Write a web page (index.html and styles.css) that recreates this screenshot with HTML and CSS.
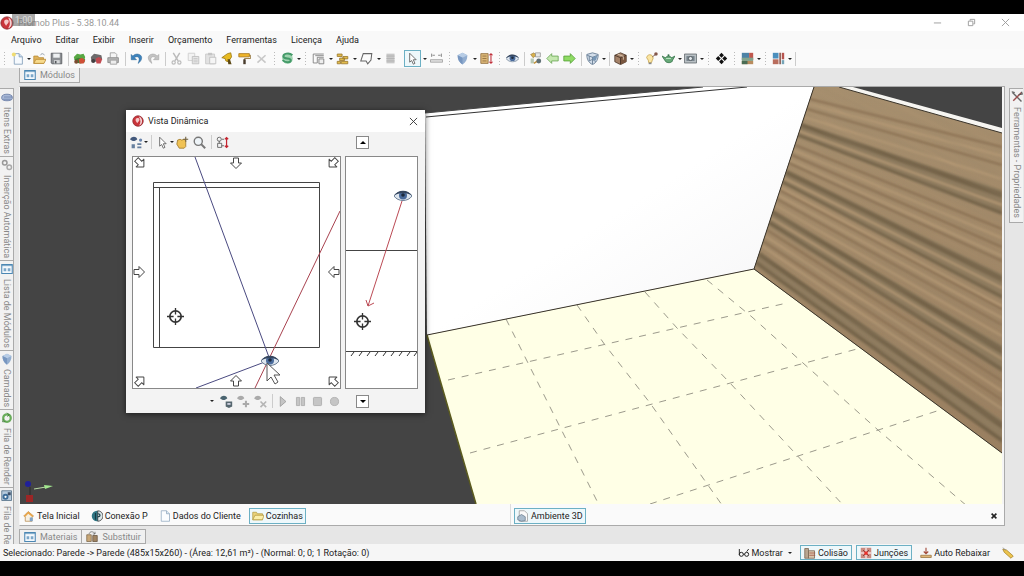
FILE: index.html
```html
<!DOCTYPE html>
<html lang="pt-BR">
<head>
  <meta charset="UTF-8" />
  <title>Promob Plus - 5.38.10.44</title>
  <link rel="stylesheet" href="styles.css">
</head>
<body>

  <!-- shared icons -->
  <svg class="sprite" aria-hidden="true">
    <symbol id="logo" viewBox="0 0 16 16"><circle cx="8" cy="8" r="7" fill="#c9343a"/><path d="M9 1.5a7 7 0 0 1 0 13c3-4 3-8 0-13z" fill="#f3d5d5"/><path d="M5 5c2-2 5-1 5 1s-2 3-3 5c-1-2-3-3-2-6z" fill="#f6c9c9"/><circle cx="8" cy="8" r="7" fill="none" stroke="#8e2a30"/></symbol>
    <symbol id="page" viewBox="0 0 16 16"><path d="M3 1h7l4 4v10H3z" fill="#fbfdff" stroke="#8fa7bd"/><path d="M10 1v4h4" fill="#dbe8f3" stroke="#8fa7bd"/></symbol>
    <symbol id="new" viewBox="0 0 16 16"><path d="M4 2h6l4 4v9H4z" fill="#f6fafe" stroke="#7f9bb8"/><path d="M10 2v4h4" fill="#c8dcee" stroke="#7f9bb8"/><circle cx="3.5" cy="3" r="2.5" fill="#f0dc72"/></symbol>
    <symbol id="open" viewBox="0 0 16 16"><path d="M1 5h5l1 2h6v7H1z" fill="#e0b35a" stroke="#b98a35"/><path d="M3.500 9H16l-2.500 5H1z" fill="#f7da8c" stroke="#b98a35"/><path d="M9 4c2-3 4-2 5 0" fill="none" stroke="#7d8b99"/></symbol>
    <symbol id="save" viewBox="0 0 16 16"><path d="M1.500 1.500h13v13h-12l-1-1z" fill="#8d9094" stroke="#55585c"/><path d="M4 2h8v5H4z" fill="#eef0f2"/><path d="M5 10h7v4H5z" fill="#d5d7d9"/><path d="M6 11h2v3H6z" fill="#55585c"/></symbol>
    <symbol id="blocks-green" viewBox="0 0 16 16"><path d="M1 6l4-4 4 1 4-1 2 4-1 4H2z" fill="#58a844"/><path d="M2 9l5-2 4 2 4 0-1 4-5 1-6-1z" fill="#3d7d33"/><path d="M7 9l4-2 4 3-2 4-5 0z" fill="#d05038"/><circle cx="4" cy="12" r="2.500" fill="#7c4c31"/></symbol>
    <symbol id="blocks-red" viewBox="0 0 16 16"><path d="M1 6l4-4 5 1 4 1 1 5-4 3H2z" fill="#6d6a6b"/><path d="M7 8l4-2 4 3-2 5-5 0z" fill="#c24a50"/><circle cx="4" cy="11" r="2.500" fill="#433e40"/></symbol>
    <symbol id="printer" viewBox="0 0 16 16"><path d="M4 7V1h6l2 2v4" fill="#f5f5f5" stroke="#999"/><path d="M1 7h13v6H1z" fill="#b5b5b5" stroke="#888"/><path d="M4 10h8v5H4z" fill="#ededed" stroke="#999"/></symbol>
    <symbol id="undo" viewBox="0 0 16 16"><path d="M1.500 3v6.500H8L5.500 7c3-2.500 7-1 5.500 4l-1 3c6-4 6-11-1-11.500C6.500 2.500 5 3.500 3.500 5z" fill="#3d83bd" stroke="#235e90" stroke-width=".6"/></symbol>
    <symbol id="redo" viewBox="0 0 16 16"><path d="M14.500 3v6.500H8L10.500 7c-3-2.500-7-1-5.500 4l1 3C0 10 0 3 7 2.500c2.500 0 4 1 5.500 2.500z" fill="#c3c3c3" stroke="#999" stroke-width=".6"/></symbol>
    <symbol id="cut" viewBox="0 0 16 16"><path d="M4 1l6 10M12 1L6 11" stroke="#bbb" stroke-width="1.800"/><circle cx="4.500" cy="13" r="2" fill="none" stroke="#bbb" stroke-width="1.500"/><circle cx="11.500" cy="13" r="2" fill="none" stroke="#bbb" stroke-width="1.500"/></symbol>
    <symbol id="copy" viewBox="0 0 16 16"><path d="M1.500 1.500h8v9h-8z" fill="#f3f3f3" stroke="#ccc"/><path d="M6.500 5.500h8v9h-8z" fill="#e5e5e5" stroke="#bbb"/><path d="M8 8h5M8 10h5M8 12h5" stroke="#c5c5c5"/></symbol>
    <symbol id="paste" viewBox="0 0 16 16"><path d="M2 2.500h11v12H2z" fill="#e2e2e2" stroke="#c5c5c5"/><path d="M5 1h5v3H5z" fill="#c5c5c5"/><path d="M7 6.500h7.500v8H7z" fill="#f5f5f5" stroke="#bbb"/></symbol>
    <symbol id="brush" viewBox="0 0 16 16"><path d="M1 7l7-5 4-1 1 5-4 6-3-1-1-3z" fill="#e8bb21" stroke="#9a7811"/><path d="M8 9l3 0 2 6-4 0z" fill="#5d4915"/></symbol>
    <symbol id="roller" viewBox="0 0 16 16"><path d="M1 2h13v4H1z" fill="#f0b62b" stroke="#a9781b"/><path d="M14 4h1.500v4H8v2" fill="none" stroke="#8b6a2b"/><path d="M6.500 9h3v6h-3z" fill="#493c2d"/></symbol>
    <symbol id="delete" viewBox="0 0 16 16"><path d="M3 4l10 9M13 4L3 13" stroke="#c8c8c8" stroke-width="2"/></symbol>
    <symbol id="money" viewBox="0 0 16 16"><circle cx="8" cy="8" r="6.500" fill="#9fd3af"/><path d="M14 4C10 0 2 2 3 6c1 3 9 1 9 4s-6 4-10 0" fill="none" stroke="#449a69" stroke-width="2.500"/></symbol>
    <symbol id="frames" viewBox="0 0 16 16"><path d="M1.500 2.500h13M1.500 2.500v11h5v-7h8M4 4.500h10.500" fill="none" stroke="#777"/><path d="M8.500 8.500h6v6h-6z" fill="#eee" stroke="#777"/></symbol>
    <symbol id="bricks" viewBox="0 0 16 16"><path d="M1.500 2.500h6v3h-6zM4.500 7.500h6v3h-6zM8.500 5.500h6v3h-6zM6.500 11.500h8v3h-8zM1.500 11.500h4v3h-4z" fill="#e3bd4c" stroke="#99762e"/></symbol>
    <symbol id="shape" viewBox="0 0 16 16"><path d="M4 2h10.500l-1 8-4 4.500-2-3.500H1z" fill="#fbfbfb" stroke="#666" stroke-width="1.300"/></symbol>
    <symbol id="sheet" viewBox="0 0 16 16"><path d="M3 2h10v12H3z" fill="#c8c8c8"/><path d="M3 5h10M3 8h10M3 11h10" stroke="#b0b0b0"/></symbol>
    <symbol id="pointer" viewBox="0 0 16 16"><path d="M4.500 1.500v11l2.500-2 2 4.500 2-1-2-4.500h3.500z" fill="#fff" stroke="#555"/></symbol>
    <symbol id="measure" viewBox="0 0 16 16"><path d="M2 2v4M14 2v4M3 4h3M10 4h3" stroke="#888" stroke-width="1.200"/><path d="M.5 9.500h15v3H.5z" fill="#e6e6e6" stroke="#999"/></symbol>
    <symbol id="shield" viewBox="0 0 16 16"><path d="M8 1l6 3c0 5-2 9-6 11.500C4 13 2 9 2 4z" fill="#93aed0"/><path d="M8 1l6 3-6 3-6-3z" fill="#b8cde6"/><path d="M8 7v8.500C4 13 2 9 2 4z" fill="#7796c0"/></symbol>
    <symbol id="box-height" viewBox="0 0 16 16"><path d="M1 2h9v12H1z" fill="#dcb878" stroke="#8e6b3b"/><path d="M3 5h5M3 8h5M3 11h5" stroke="#8e6b3b"/><path d="M13.500 2v12M11.500 4l2-2 2 2M11.500 12l2 2 2-2" fill="none" stroke="#c02f3a" stroke-width="1.300"/></symbol>
    <symbol id="eye" viewBox="0 0 18 14"><path d="M0 7C4 1 14 1 18 7c-4 6-14 6-18 0z" fill="#dde5ee" stroke="#6d8097"/><circle cx="9" cy="6.500" r="4" fill="#4a6b9c"/><circle cx="9" cy="6" r="1.800" fill="#1d2a3d"/><path d="M0 6.500C4 0 14 0 18 6.500 13 3 5 3 0 6.500z" fill="#364760"/></symbol>
    <symbol id="config" viewBox="0 0 16 16"><path d="M2 3l4-2 3 3-4 3z" fill="#d8b04c" stroke="#8e7540" stroke-width=".7"/><path d="M8 1h6v5H8z" fill="#e6e8e8" stroke="#777" stroke-width=".7"/><path d="M2 8h4v6H2z" fill="#b8c8b4"/><path d="M6 14l6-4" stroke="#c0913a" stroke-width="2"/><circle cx="12" cy="11" r="3" fill="#5f6f75"/></symbol>
    <symbol id="arrow-left" viewBox="0 0 16 16"><path d="M1 8l6-6v3h8v6H7v3z" fill="#c5e8b0" stroke="#67a553"/></symbol>
    <symbol id="arrow-right" viewBox="0 0 16 16"><path d="M15 8L9 2v3H1v6h8v3z" fill="#8fdb64" stroke="#55a038"/></symbol>
    <symbol id="shield-cube" viewBox="0 0 16 16"><path d="M1 3l7-2 7 2c0 6-2 10-7 12.500C3 13 1 9 1 3z" fill="#d3deea" stroke="#5d748d"/><path d="M8 6v9M1.500 4L8 6.500 14.500 4M4 5v6l4-2 4 3" fill="none" stroke="#5d748d"/><path d="M8 6.500l6-2-2 6-4-1z" fill="#7696b5"/></symbol>
    <symbol id="cube" viewBox="0 0 16 16"><path d="M8 1l7 3v8l-7 3.500L1 12V4z" fill="#a5836a" stroke="#4b3629"/><path d="M8 7l7-3v8l-7 3.500z" fill="#79563f"/><path d="M1 4l7 3 7-3M8 7v8" fill="none" stroke="#3d2b20"/><path d="M4.500 2.500l7 3v4" fill="none" stroke="#e5d2bb"/></symbol>
    <symbol id="bulb" viewBox="0 0 16 16"><path d="M2 7a4 4 0 1 1 7 3l-1 3H4.500L4 10z" fill="#fae5a3" stroke="#c6a450"/><path d="M4.500 13h3.500v2H4.500z" fill="#888"/><path d="M9 6l4-3" stroke="#6b4a3d"/><circle cx="13.500" cy="2.500" r="2.200" fill="#83574b"/></symbol>
    <symbol id="teapot" viewBox="0 0 16 16"><path d="M0 5l4 2c1-2 7-2 8 0l4-2-3 5c0 4-8 4-9 1z" fill="#67a978" stroke="#36744a"/><circle cx="8" cy="4" r="1.300" fill="#36744a"/><path d="M5 8h6" stroke="#c9edcf"/></symbol>
    <symbol id="photo" viewBox="0 0 16 16"><path d="M.5 2.500h15v11H.5z" fill="#b9c0c4" stroke="#5f666b"/><path d="M3 5h10v6H3z" fill="#76838b"/><circle cx="8" cy="8" r="2.500" fill="#dfe6ea" stroke="#4d5459"/></symbol>
    <symbol id="diamonds" viewBox="0 0 16 16"><path d="M8 1l3 3-3 3-3-3zM4 5l3 3-3 3-3-3zM12 5l3 3-3 3-3-3zM8 9l3 3-3 3-3-3z" fill="#111"/></symbol>
    <symbol id="palette" viewBox="0 0 16 16"><path d="M1 1h9v9H1z" fill="#4d83a6"/><path d="M10 1h5v9h-5z" fill="#c0584e"/><path d="M1 7h14v4H1z" fill="#83a48d"/><path d="M1 11h14v4H1z" fill="#b98c5e"/><path d="M1 11h7v4H1z" fill="#4a6d55"/></symbol>
    <symbol id="palette2" viewBox="0 0 16 16"><path d="M1 1h7v7H1z" fill="#4b8fbd"/><path d="M9 1h2v14H9z" fill="#8a5b53"/><path d="M12 1h3v8h-3z" fill="#b7544e"/><path d="M1 9h7v6H1z" fill="#b96d5d"/><path d="M12 10h3v5h-3z" fill="#76a4b7"/></symbol>
    <symbol id="panel" viewBox="0 0 16 16"><path d="M1 2h14v12H1z" fill="#f4f9fd" stroke="#4b87b3" stroke-width="1.400"/><path d="M1 3.500h14" stroke="#4b87b3"/><path d="M3.500 7H7v4H3.500zM9 7h3.500v4H9z" fill="#7ba7c9"/></symbol>
    <symbol id="swap" viewBox="0 0 16 16"><path d="M1 5h6v9H1z" fill="#c9a878" stroke="#7c6548"/><path d="M9 6h6v8H9z" fill="#a08463" stroke="#66523c"/><path d="M4 4c1-4 6-4 8 0M12 1v3H9" fill="none" stroke="#666"/></symbol>
    <symbol id="clip" viewBox="0 0 16 16"><path d="M1 8c0-5 14-5 14 0v2c0 4-14 4-14 0z" fill="#a9b9d7" stroke="#5a6f9c"/><path d="M4 8h11M3 11h10" stroke="#6a7fa9"/></symbol>
    <symbol id="gears" viewBox="0 0 16 16"><circle cx="5" cy="5" r="3" fill="none" stroke="#999" stroke-width="2"/><circle cx="11" cy="11" r="3" fill="none" stroke="#aaa" stroke-width="2"/></symbol>
    <symbol id="recycle" viewBox="0 0 16 16"><circle cx="8" cy="8" r="5" fill="none" stroke="#69ad5b" stroke-width="3"/><path d="M8 1l3 3-3 2M3 9l-1 4 4 0" fill="none" stroke="#3c7733"/></symbol>
    <symbol id="queue" viewBox="0 0 16 16"><path d="M1 1h13v13H1z" fill="#b7cbdd" stroke="#49677f"/><circle cx="6" cy="9" r="4" fill="#3d6d99"/><circle cx="6" cy="9" r="1.500" fill="#fff"/><path d="M9 3h4v4H9z" fill="#41526a"/></symbol>
    <symbol id="tools" viewBox="0 0 16 16"><path d="M2 2l12 12" stroke="#666" stroke-width="2"/><path d="M14 2L3 13" stroke="#9d4c4c" stroke-width="2"/><path d="M10 5l5-1-1-3M1 1l4 1" fill="none" stroke="#555" stroke-width="1.500"/></symbol>
    <symbol id="home" viewBox="0 0 16 16"><path d="M1 8l6-6 7 6-2 1v6H3V9z" fill="#f7f0e2" stroke="#b58a4e"/><path d="M1 8l6-6 7 6-2 1-5-4-4 4z" fill="#e9a548"/><path d="M9 10h4v5H9z" fill="#7fa3c7"/></symbol>
    <symbol id="connect" viewBox="0 0 16 16"><circle cx="8" cy="8" r="7" fill="#2f7583"/><path d="M9 1a7 7 0 0 1 0 14z" fill="#dbe6e9" stroke="#333"/><path d="M6 4v9M9 5c4 0 4 4 0 4" fill="none" stroke="#163a44" stroke-width="1.500"/></symbol>
    <symbol id="folder" viewBox="0 0 16 16"><path d="M1 3h5l1 2h7v8H1z" fill="#ead27a" stroke="#b39a42"/><path d="M4 7h12l-2 6H1z" fill="#fbeea9" stroke="#b39a42"/></symbol>
    <symbol id="env" viewBox="0 0 16 16"><path d="M3 1h7l4 4v10H3z" fill="#fafafa" stroke="#999"/><path d="M1 9l5-3 5 3v5l-5 1-5-2z" fill="#a9bccd" stroke="#677b8d"/></symbol>
    <symbol id="glasses" viewBox="0 0 18 16"><path d="M2 2v9M16 2l-3 4" stroke="#222" stroke-width="1.400"/><circle cx="5" cy="10" r="3" fill="none" stroke="#222" stroke-width="1.500"/><circle cx="13" cy="10" r="3" fill="none" stroke="#222" stroke-width="1.500"/><path d="M8 10h2" stroke="#222" stroke-width="1.500"/></symbol>
    <symbol id="collide" viewBox="0 0 16 16"><path d="M1 2h5v13H1z" fill="#b9a590" stroke="#75614d"/><path d="M6 5h8v10H6z" fill="#d9c7ae" stroke="#75614d"/><path d="M7 8h8M7 11h8" stroke="#a14b3c"/></symbol>
    <symbol id="joints" viewBox="0 0 16 16"><path d="M1 1h14v14H1z" fill="#c98a80"/><path d="M1 8h14M8 1v14" stroke="#f3dada" stroke-width="2"/><path d="M4 4l8 8M12 4l-8 8" stroke="#7c2826"/><circle cx="8" cy="8" r="2.500" fill="#e9312b"/></symbol>
    <symbol id="lower" viewBox="0 0 16 16"><path d="M8 1v8M5 6l3 3 3-3" fill="none" stroke="#a24b3b" stroke-width="1.500"/><path d="M1 11h14v3H1z" fill="#e0b576" stroke="#96703b"/></symbol>
    <symbol id="tag" viewBox="0 0 16 16"><path d="M1 3l5 1 9 8-3 3-9-8z" fill="#ecc44e" stroke="#a68227"/><path d="M1 1l4 3" stroke="#888"/></symbol>
    <symbol id="viewpoints" viewBox="0 0 16 16"><path d="M0 4c3-4 7-4 9 0-3 3-6 3-9 0z" fill="#43597c"/><circle cx="13" cy="5" r="2" fill="#6a85ad"/><path d="M2 10h4v5H2zM9 9h5v2H9zM9 13h5v2H9z" fill="#67809f"/></symbol>
    <symbol id="hand" viewBox="0 0 16 16"><path d="M2 5l3-1 2 1 3-1 2 2v7l-2 2H4L1 10z" fill="#f0c254" stroke="#9f7729"/><path d="M12 1v6M9 4h6" stroke="#6e5d3a" stroke-width="1.300"/></symbol>
    <symbol id="lens" viewBox="0 0 16 16"><circle cx="6.500" cy="6.500" r="5" fill="#eef4f8" stroke="#777" stroke-width="1.700"/><path d="M10 10l5 5" stroke="#777" stroke-width="2.500"/></symbol>
    <symbol id="updown" viewBox="0 0 16 16"><circle cx="4" cy="4" r="2.500" fill="none" stroke="#555"/><path d="M2 9h5v5H2zM4 6v3M7 4h3M7 12h3" fill="none" stroke="#555"/><path d="M13 2v12M11 4l2-2 2 2M11 12l2 2 2-2" fill="none" stroke="#c3242f" stroke-width="1.500"/></symbol>
    <symbol id="cam" viewBox="0 0 16 16"><path d="M0 4c3-4 7-4 9 0-3 3-6 3-9 0z" fill="#4a6470"/><path d="M7 8h8v6l-4 2-4-2z" fill="#56676f"/><path d="M9 10h4v2H9z" fill="#dde"/></symbol>
    <symbol id="cam-add" viewBox="0 0 16 16"><path d="M0 4c3-4 7-4 9 0-3 3-6 3-9 0z" fill="#aaa"/><path d="M11 7v8M7 11h8" stroke="#aaa" stroke-width="2.500"/></symbol>
    <symbol id="cam-del" viewBox="0 0 16 16"><path d="M0 4c3-4 7-4 9 0-3 3-6 3-9 0z" fill="#aaa"/><path d="M8 8l7 7M15 8l-7 7" stroke="#b5b5b5" stroke-width="2"/></symbol>
    <symbol id="play" viewBox="0 0 16 16"><path d="M4 2l7 6-7 6z" fill="#c5c5c5" stroke="#999"/></symbol>
    <symbol id="pause" viewBox="0 0 16 16"><path d="M3 3h4v10H3zM9 3h4v10H9z" fill="#c5c5c5" stroke="#aaa"/></symbol>
    <symbol id="stop" viewBox="0 0 16 16"><rect x="3" y="3" width="10" height="10" rx="1" fill="#c5c5c5" stroke="#aaa"/></symbol>
    <symbol id="record" viewBox="0 0 16 16"><circle cx="8" cy="8" r="5" fill="#c5c5c5" stroke="#aaa"/></symbol>
    <symbol id="target" viewBox="0 0 18 18"><circle cx="9" cy="9" r="6" fill="none" stroke="#333" stroke-width="1.800"/><path d="M9 0v7M9 11v7M0 9h7M11 9h7" stroke="#333" stroke-width="1.400"/></symbol>
    <symbol id="block-arrow" viewBox="0 0 12 12"><path d="M3.500 1h5v5h3L6 11.500.5 6h3z" fill="#fff" stroke="#444"/></symbol>
  </svg>

  <div class="app">
    <header class="titlebar">
      <svg class="icon"><use href="#logo"/></svg>
      <h1>Promob Plus - 5.38.10.44</h1>
      <span class="clock">1:00</span>
      <div class="window-buttons">
        <button aria-label="Minimizar"><svg viewBox="0 0 10 10"><path d="M1 5.500h8"/></svg></button>
        <button aria-label="Restaurar"><svg viewBox="0 0 10 10"><path d="M1.500 3.500h5v5h-5zM3.500 3V1.500h5v5H7"/></svg></button>
        <button aria-label="Fechar"><svg viewBox="0 0 10 10"><path d="M1 1l8 8M9 1L1 9"/></svg></button>
      </div>
    </header>

    <nav class="menubar">
      <button>Arquivo</button>
      <button>Editar</button>
      <button>Exibir</button>
      <button>Inserir</button>
      <button>Orçamento</button>
      <button>Ferramentas</button>
      <button>Licença</button>
      <button>Ajuda</button>
    </nav>

    <div class="toolbar">
      <i class="grip"></i>
      <button aria-label="Novo"><svg><use href="#new"/></svg></button><button class="drop" aria-label="Opções"></button>
      <button aria-label="Abrir"><svg><use href="#open"/></svg></button>
      <button aria-label="Salvar"><svg><use href="#save"/></svg></button>
      <i class="sep"></i>
      <button aria-label="Módulos"><svg><use href="#blocks-green"/></svg></button>
      <button aria-label="Remover módulos"><svg><use href="#blocks-red"/></svg></button>
      <button aria-label="Imprimir"><svg><use href="#printer"/></svg></button>
      <i class="sep"></i>
      <button aria-label="Desfazer"><svg><use href="#undo"/></svg></button>
      <button aria-label="Refazer"><svg><use href="#redo"/></svg></button>
      <i class="sep"></i>
      <button aria-label="Recortar"><svg><use href="#cut"/></svg></button>
      <button aria-label="Copiar"><svg><use href="#copy"/></svg></button>
      <button aria-label="Colar"><svg><use href="#paste"/></svg></button>
      <button aria-label="Pincel"><svg><use href="#brush"/></svg></button>
      <button aria-label="Rolo"><svg><use href="#roller"/></svg></button>
      <button aria-label="Excluir"><svg><use href="#delete"/></svg></button>
      <i class="grip"></i>
      <button aria-label="Orçamento"><svg><use href="#money"/></svg></button><button class="drop" aria-label="Opções"></button>
      <i class="grip"></i>
      <button aria-label="Ambiente"><svg><use href="#frames"/></svg></button><button class="drop wide" aria-label="Opções"></button>
      <button aria-label="Paredes"><svg><use href="#bricks"/></svg></button><button class="drop wide" aria-label="Opções"></button>
      <button aria-label="Forma"><svg><use href="#shape"/></svg></button><button class="drop wide" aria-label="Opções"></button>
      <button aria-label="Folha"><svg><use href="#sheet"/></svg></button>
      <i class="space"></i>
      <button class="active" aria-label="Selecionar"><svg><use href="#pointer"/></svg></button><button class="drop wide" aria-label="Opções"></button>
      <button aria-label="Medir"><svg><use href="#measure"/></svg></button>
      <i class="grip"></i>
      <button aria-label="Camadas"><svg><use href="#shield"/></svg></button><button class="drop wide" aria-label="Opções"></button>
      <button aria-label="Altura"><svg><use href="#box-height"/></svg></button>
      <i class="grip"></i>
      <button aria-label="Visualizar"><svg><use href="#eye"/></svg></button>
      <i class="sep"></i>
      <button aria-label="Configurar"><svg><use href="#config"/></svg></button>
      <button aria-label="Anterior"><svg><use href="#arrow-left"/></svg></button>
      <button aria-label="Próximo"><svg><use href="#arrow-right"/></svg></button>
      <i class="sep"></i>
      <button aria-label="Vistas"><svg><use href="#shield-cube"/></svg></button><button class="drop" aria-label="Opções"></button>
      <i class="sep"></i>
      <button aria-label="Perspectiva"><svg><use href="#cube"/></svg></button><button class="drop" aria-label="Opções"></button>
      <i class="grip"></i>
      <button aria-label="Luz"><svg><use href="#bulb"/></svg></button>
      <button aria-label="Render"><svg><use href="#teapot"/></svg></button><button class="drop" aria-label="Opções"></button>
      <button aria-label="Foto"><svg><use href="#photo"/></svg></button><button class="drop" aria-label="Opções"></button>
      <i class="grip"></i>
      <button aria-label="Mosaico"><svg><use href="#diamonds"/></svg></button>
      <i class="grip"></i>
      <button aria-label="Cores"><svg><use href="#palette"/></svg></button><button class="drop" aria-label="Opções"></button>
      <i class="grip"></i>
      <button aria-label="Padrões"><svg><use href="#palette2"/></svg></button><button class="drop" aria-label="Opções"></button>
      <i class="sep"></i>
    </div>

    <div class="workspace">
      <aside class="side side-left">
        <button><svg><use href="#clip"/></svg>Itens Extras</button>
        <button><svg><use href="#gears"/></svg>Inserção Automática</button>
        <button><svg><use href="#panel"/></svg>Lista de Módulos</button>
        <button><svg><use href="#shield"/></svg>Camadas</button>
        <button><svg><use href="#recycle"/></svg>Fila de Render</button>
        <button><svg><use href="#queue"/></svg>Fila de Ren</button>
      </aside>

      <div class="center">
        <div class="dock dock-top">
          <button><svg><use href="#panel"/></svg>Módulos</button>
        </div>

        <main class="document">
          <div class="viewport">
            <svg class="scene" viewBox="0 0 982 417" preserveAspectRatio="xMinYMin slice">
              <defs>
                <clipPath id="wood-clip"><path d="M794 0H822L982 46V366L734 182z"/></clipPath>
                <linearGradient id="wood" x1="0" y1="0" x2="0" y2="1"><stop offset="0" stop-color="#a8906f"/><stop offset="1" stop-color="#9a7f60"/></linearGradient>
                <linearGradient id="wall" x1="0" y1="0" x2="1" y2="1"><stop offset="0.500" stop-color="#fff"/><stop offset="1" stop-color="#f4f4f5"/></linearGradient>
                <filter id="soft"><feGaussianBlur stdDeviation="1.300"/></filter>
                <filter id="grain" x="0" y="0" width="100%" height="100%">
                  <feTurbulence type="fractalNoise" baseFrequency="0.008 0.16" numOctaves="3" seed="4"/>
                  <feColorMatrix values="0 0 0 0 0.3  0 0 0 0 0.23  0 0 0 0 0.14  1.400 0 0 0 -0.450"/>
                </filter>
              </defs>
              <path d="M405 26L683 0H794L734 182 407 248z" fill="url(#wall)"/>
              <path d="M405 26L683 0" stroke="#444"/>
              <path d="M406 30L727 0" stroke="#333"/>
              <path d="M407 248L734 182 982 366V417H456z" fill="#ffffe6"/>
              <path d="M407 248L456 417" stroke="#5b5b1e" stroke-width="1.500"/>
              <path class="tile" d="M486 232L580 420M557 218L585 258 630 316 702 418M625 205L657 241 710 296 824 419M687 193L732 230 783 276 858 343 947 419M428 293L767 216M450 366L837 262M630 417L920 323"/>

              <g clip-path="url(#wood-clip)">
                <path d="M730 0H982V370H730z" fill="url(#wood)"/>
                <g filter="url(#soft)">
                  <path class="wood-mid" d="M782 36L982 103V128L777 50zM767 83L982 187V212L762 97zM753 123L982 258V285L748 138zM740 165L982 333V356L735 178z"/>
                  <path class="wood-dark" d="M782 36L982 105V111L780 40zM778 47L982 124V128L777 49zM767 83L982 189V195L765 87zM763 94L982 208V212L762 96zM753 123L982 260V267L752 127zM750 134L982 280V285L748 137zM740 165L982 335V342L738 169zM737 174L982 351V356L735 177z"/>
                  <path class="wood-line" d="M790 12L982 60M787 22L982 78M775 58L982 142M772 68L982 160M769 76L982 174M760 103L982 222M757 112L982 238M747 143L982 294M743 154L982 313"/>
                  <path class="wood-light" d="M788 17L982 69M784 30L982 92M779 44L982 118M773 63L982 151M770 73L982 169M764 91L982 201M761 101L982 219M758 108L982 231M755 118L982 249M751 131L982 272M745 149L982 304M742 159L982 322"/>
                </g>
                <rect x="640" y="-160" width="500" height="560" filter="url(#grain)" opacity=".3" transform="rotate(27 794 100)"/>
              </g>
              <path d="M819 0H833L982 41V46z" fill="#f6f5f1"/>
              <path d="M819 0L982 46M794 0L734 182M407 248L734 182 982 366" fill="none" stroke="#3b352b"/>

              <path d="M14 402L26 400" stroke="#b9dba5"/>
              <path d="M24 398L33 399 25 402z" fill="#a3e88f"/>
              <circle cx="8" cy="397" r="3" fill="#20209a"/>
              <path d="M6 408h7v7H6z" fill="#9b2626"/>
              <path d="M10 400v8" stroke="#2a2a2a"/>
            </svg>

            <section class="dialog">
              <header>
                <svg class="icon"><use href="#logo"/></svg>
                <h2>Vista Dinâmica</h2>
                <button aria-label="Fechar"><svg viewBox="0 0 10 10"><path d="M1 1l8 8M9 1L1 9"/></svg></button>
              </header>
              <div class="dialog-tools">
                <div class="tool-group">
                  <button aria-label="Pontos de vista"><svg><use href="#viewpoints"/></svg></button><button class="drop" aria-label="Opções"></button>
                  <i class="sep"></i>
                  <button aria-label="Selecionar"><svg><use href="#pointer"/></svg></button><button class="drop" aria-label="Opções"></button>
                  <button aria-label="Mover"><svg><use href="#hand"/></svg></button>
                  <button aria-label="Zoom"><svg><use href="#lens"/></svg></button>
                  <i class="sep"></i>
                  <button aria-label="Altura"><svg><use href="#updown"/></svg></button>
                </div>
                <button class="step up" aria-label="Subir"></button>
              </div>
              <div class="views">
                <svg class="view" viewBox="0 0 207 231">
                  <path d="M20.500 190.500V25.500H186.500V190.500zM20.500 30.500H186.500M26.500 30V190" fill="none" stroke="#444"/>
                  <path d="M62 0L137 203 63 231" fill="none" stroke="#4a4a80"/>
                  <path d="M207 54L122 231" stroke="#a8424f"/>
                  <use href="#block-arrow" x="97" y="0" width="12" height="12"/>
                  <use href="#block-arrow" x="97" y="0" width="12" height="12" transform="rotate(180 103 115)"/>
                  <use href="#block-arrow" x="0" y="0" width="12" height="12" transform="translate(0 121) rotate(-90)"/>
                  <use href="#block-arrow" x="0" y="0" width="12" height="12" transform="translate(207 109) rotate(90)"/>
                  <use href="#block-arrow" x="-6" y="-6" width="12" height="12" transform="translate(7 6) rotate(-45)"/>
                  <use href="#block-arrow" x="-6" y="-6" width="12" height="12" transform="translate(200 6) rotate(45)"/>
                  <use href="#block-arrow" x="-6" y="-6" width="12" height="12" transform="translate(7 224) rotate(-135)"/>
                  <use href="#block-arrow" x="-6" y="-6" width="12" height="12" transform="translate(200 224) rotate(135)"/>
                  <use href="#target" x="34" y="151" width="17" height="17"/>
                  <use href="#eye" x="128" y="197" width="18" height="14"/>
                  <path d="M134 206v18l4-4 4 7 3-2-4-7h6z" fill="#fff" stroke="#555"/>
                </svg>
                <svg class="view" viewBox="0 0 71 231">
                  <path d="M0 93.500H71M0 194.500H71" stroke="#444"/>
                  <path d="M5 199l3-4M13 199l3-4M21 199l3-4M29 199l3-4M37 199l3-4M45 199l3-4M53 199l3-4M61 199l3-4M68 199l3-4" stroke="#333"/>
                  <path d="M56 44L22 149M20 143l2 6 6-3" fill="none" stroke="#bb4a54"/>
                  <use href="#eye" x="48" y="32" width="18" height="14"/>
                  <use href="#target" x="8" y="156" width="17" height="17"/>
                </svg>
              </div>
              <div class="dialog-tools">
                <div class="tool-group player">
                  <button class="drop" aria-label="Opções"></button>
                  <button aria-label="Câmera"><svg><use href="#cam"/></svg></button>
                  <button aria-label="Adicionar câmera"><svg><use href="#cam-add"/></svg></button>
                  <button aria-label="Remover câmera"><svg><use href="#cam-del"/></svg></button>
                  <i class="sep"></i>
                  <button aria-label="Reproduzir"><svg><use href="#play"/></svg></button>
                  <button aria-label="Pausar"><svg><use href="#pause"/></svg></button>
                  <button aria-label="Parar"><svg><use href="#stop"/></svg></button>
                  <button aria-label="Gravar"><svg><use href="#record"/></svg></button>
                </div>
                <button class="step down" aria-label="Descer"></button>
              </div>
            </section>
          </div>

          <div class="tabs">
            <div class="tab-group">
              <button><svg><use href="#home"/></svg>Tela Inicial</button>
              <button><svg><use href="#connect"/></svg>Conexão P</button>
              <button><svg><use href="#page"/></svg>Dados do Cliente</button>
              <button class="active"><svg><use href="#folder"/></svg>Cozinhas</button>
            </div>
            <div class="tab-group">
              <button class="active"><svg><use href="#env"/></svg>Ambiente 3D</button>
              <button class="close" aria-label="Fechar"><svg viewBox="0 0 10 10"><path d="M2 2l6 6M8 2L2 8"/></svg></button>
            </div>
          </div>
        </main>

        <div class="dock dock-bottom">
          <button><svg><use href="#panel"/></svg>Materiais</button>
          <button><svg><use href="#swap"/></svg>Substituir</button>
        </div>
      </div>

      <aside class="side side-right">
        <button><svg><use href="#tools"/></svg>Ferramentas - Propriedades</button>
      </aside>
    </div>

    <footer class="statusbar">
      <p>Selecionado: Parede -&gt; Parede (485x15x260) - (Área: 12,61 m²) - (Normal: 0; 0; 1 Rotação: 0)</p>
      <button><svg><use href="#glasses"/></svg>Mostrar<i class="caret"></i></button>
      <button class="active"><svg><use href="#collide"/></svg>Colisão</button>
      <button class="active"><svg><use href="#joints"/></svg>Junções</button>
      <button><svg><use href="#lower"/></svg>Auto Rebaixar</button>
      <button aria-label="Etiqueta"><svg><use href="#tag"/></svg></button>
    </footer>
  </div>

</body>
</html>
```

FILE: styles.css
```css
* {
  box-sizing: border-box;
}

body {
  margin: 0;
  height: 100vh;
  padding: 14px 0 15px;
  background: #000;
  color: #222;
  font-family: Roboto, "Open Sans", sans-serif;
  font-size: 9px;
  line-height: 12px;
  overflow: hidden;
}

h1, h2, p {
  margin: 0;
  font-size: 9px;
  font-weight: normal;
}

button {
  display: flex;
  align-items: center;
  justify-content: center;
  margin: 0;
  padding: 0;
  border: 1px solid transparent;
  background: none;
  color: inherit;
  font: inherit;
  white-space: nowrap;
}

svg {
  display: block;
  flex: none;
}

.sprite {
  position: absolute;
  width: 0;
  height: 0;
}

.app {
  display: flex;
  flex-direction: column;
  height: 100%;
  background: #e6e6e6;
}

/* title and menu */
.titlebar {
  position: relative;
  display: flex;
  align-items: center;
  gap: 4px;
  height: 17px;
  background: #fff;
  color: #999;
}

.titlebar .icon {
  width: 14px;
  height: 14px;
}

.clock {
  position: absolute;
  left: 12px;
  top: 0;
  padding: 0 3px;
  background: rgba(110, 110, 110, 0.6);
  color: #ddd;
}

.window-buttons {
  display: flex;
  margin-left: auto;
  padding-right: 2px;
}

.window-buttons button {
  width: 34px;
}

.window-buttons svg,
.dialog header button svg,
.close svg {
  width: 9px;
  height: 9px;
  fill: none;
  stroke: #999;
}

.menubar {
  display: flex;
  align-items: center;
  height: 18px;
  padding-left: 4px;
  background: #f9f9f9;
}

.menubar button {
  padding: 0 6px;
}

/* toolbars */
.toolbar {
  display: flex;
  align-items: center;
  height: 19px;
  background: #fafafa;
}

.toolbar button,
.tool-group button {
  width: 17px;
  height: 17px;
}

.toolbar svg,
.tool-group svg {
  width: 13px;
  height: 13px;
}

.toolbar .drop,
.tool-group .drop {
  width: 5px;
}

.toolbar .wide {
  width: 7px;
}

.drop::before,
.caret {
  content: "";
  border: 2px solid transparent;
  border-top-color: #222;
  border-bottom: 0;
}

button.active {
  border-color: #6cb0c4;
  background: #eef8fb;
}

.sep {
  width: 6px;
  height: 14px;
  background: linear-gradient(#ccc, #ccc) center / 1px 100% no-repeat;
}

.grip {
  width: 9px;
  height: 14px;
  background: repeating-linear-gradient(#bbb 0 1px, transparent 1px 3px) center / 1px 100% no-repeat;
}

.space {
  width: 5px;
}

/* docks */
.workspace {
  display: flex;
  flex: 1;
  min-height: 0;
}

.side {
  display: flex;
  flex-direction: column;
  width: 19px;
  padding-top: 20px;
  overflow: hidden;
  color: #888;
}

.side button {
  justify-content: flex-start;
  gap: 4px;
  width: 14px;
  padding: 2px 0;
  border-color: #aaa;
  border-left: 0;
  background: #f2f2f2;
  writing-mode: vertical-rl;
}

.side button + button {
  border-top: 0;
}

.side-left button {
  flex: none;
}

.side-right button {
  margin-left: 4px;
  padding-bottom: 4px;
  border-left: 1px solid #aaa;
  border-right: 0;
}

.side svg {
  width: 12px;
  height: 12px;
}

.center {
  display: flex;
  flex-direction: column;
  flex: 1;
  min-width: 0;
}

.dock {
  display: flex;
  height: 18px;
  color: #888;
}

.dock button {
  gap: 4px;
  height: 15px;
  padding: 0 4px;
  border-color: #aaa;
  background: #f0f0f0;
}

.dock-top button {
  border-top: 0;
}

.dock-bottom {
  align-items: flex-end;
}

.dock-bottom button + button {
  border-left: 0;
}

.dock svg,
.tabs svg,
.statusbar svg {
  width: 12px;
  height: 12px;
}

.document {
  display: flex;
  flex-direction: column;
  flex: 1;
  min-height: 0;
  border: 1px solid #aaa;
  border-left-color: #f5f5f5;
  background: #f5f5f5;
}

.viewport {
  position: relative;
  flex: 1;
  min-height: 0;
  margin-right: 2px;
  background: #444;
  overflow: hidden;
}

.scene {
  width: 100%;
  height: 100%;
}

.tile {
  fill: none;
  stroke: #9c9a8c;
  stroke-dasharray: 7 7;
}

.wood-mid {
  fill: #8f7c5f;
}

.wood-dark {
  fill: #75644a;
}

.wood-line {
  stroke: #8a7052;
  stroke-width: 2px;
}

.wood-light {
  stroke: #b69a76;
  stroke-width: 2px;
}

.tabs {
  display: flex;
  height: 21px;
  background: #fafafa;
}

.tab-group {
  display: flex;
  flex: 1;
  align-items: flex-end;
  gap: 5px;
  padding: 0 3px 1px 0;
}

.tab-group + .tab-group {
  padding-left: 3px;
  border-left: 1px solid #ddd;
}

.tabs button {
  gap: 2px;
  height: 16px;
  padding: 0 2px;
}

.tabs .close {
  margin-left: auto;
}

.close svg {
  width: 8px;
  stroke: #222;
  stroke-width: 2px;
}

.tabs .close svg {
  width: 8px;
}

/* floating window */
.dialog {
  position: absolute;
  left: 106px;
  top: 23px;
  width: 299px;
  padding: 0 6px;
  background: #f3f3f3;
  box-shadow: 0 1px 6px rgba(0, 0, 0, 0.6);
}

.dialog header {
  display: flex;
  align-items: center;
  gap: 4px;
  height: 22px;
  margin: 0 -6px;
  padding: 0 6px;
  background: #fff;
}

.dialog header .icon {
  width: 12px;
  height: 12px;
}

.dialog header button {
  margin-left: auto;
}

.dialog header button svg {
  stroke: #333;
}

.dialog-tools {
  display: grid;
  grid-template-columns: 1fr 63px;
  align-items: center;
  height: 24px;
  margin-left: -4px;
}

.dialog header + .dialog-tools {
  padding-bottom: 4px;
}

.tool-group {
  display: flex;
  align-items: center;
}

.tool-group .drop {
  margin-left: -2px;
}

.player {
  justify-content: flex-end;
  padding-right: 13px;
}

.player .drop {
  margin-right: 4px;
}

.step {
  width: 13px;
  height: 13px;
  border-color: #888;
  background: #fff;
}

.step::before {
  content: "";
  border: 3px solid transparent;
}

.up::before {
  border-bottom-color: #000;
  border-top: 0;
}

.down::before {
  border-top-color: #000;
  border-bottom: 0;
}

.views {
  display: grid;
  grid-template-columns: 209px 73px;
  gap: 4px;
}

.view {
  width: 100%;
  border: 1px solid #888;
  background: #fff;
}

/* status bar */
.statusbar {
  display: flex;
  align-items: center;
  gap: 4px;
  height: 17px;
  padding: 0 6px 0 3px;
  background: #f6f6f6;
}

.statusbar p {
  margin-right: auto;
}

.statusbar button {
  gap: 2px;
  height: 15px;
  padding: 0 3px;
}

.caret {
  margin-left: 3px;
}
```
